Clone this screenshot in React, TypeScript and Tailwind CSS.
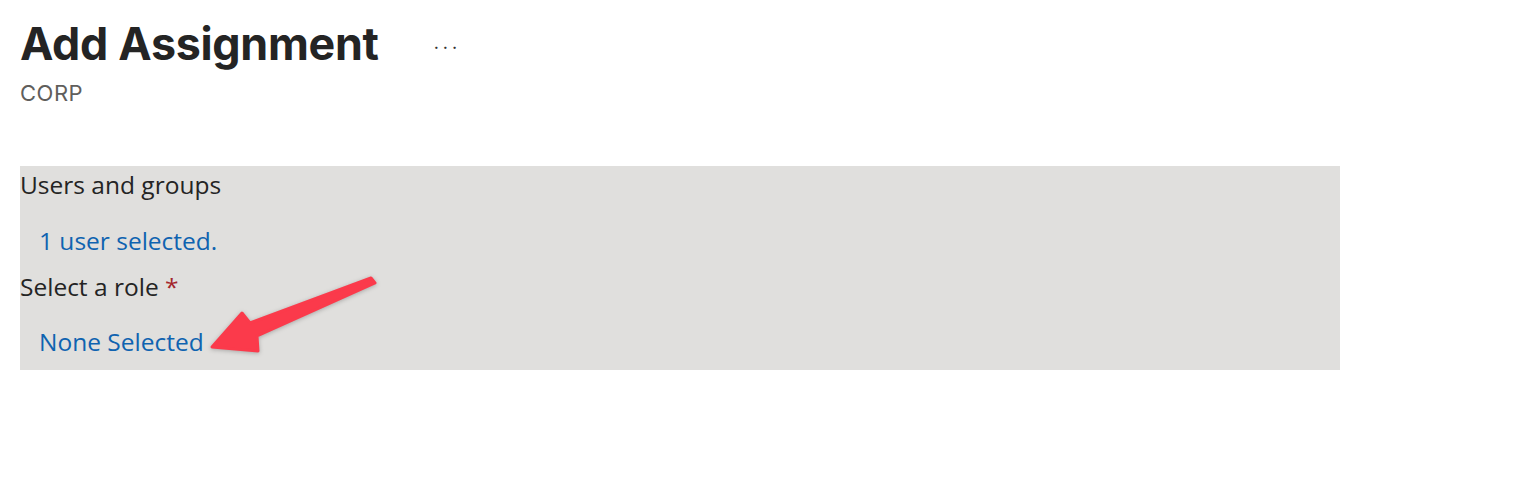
import React from "react";

const Arrow: React.FC = () => (
  <svg
    className="absolute left-0 top-0 pointer-events-none"
    width="400"
    height="204"
    viewBox="0 0 400 204"
    style={{ filter: "drop-shadow(0 1px 2px rgba(0,0,0,0.25))" }}
  >
    <polygon
      points="351,112 355,117 237,170 238,185 192,181 222,147 230,157"
      fill="#fb3a4b"
      stroke="#fb3a4b"
      strokeWidth="3"
      strokeLinejoin="round"
    />
  </svg>
);

export default function App() {
  return (
    <div className="min-h-[482px] bg-white px-5 pt-[14px]">
      <div className="flex items-start">
        <h1 className="text-[44.8px] leading-[60px] font-bold text-[#242424] tracking-[-0.3px]" style={{ fontFamily: "Inter, sans-serif" }}>
          Add Assignment
        </h1>
        <span className="ml-[55px] mt-[24px] text-[18px] leading-[20px] text-[#323130] tracking-[4px]" style={{ fontFamily: "Inter, sans-serif" }}>
          ···
        </span>
      </div>
      <div className="mt-[5px] text-[22px] leading-[28px] text-[#605e5c] tracking-[0.5px]" style={{ fontFamily: "Inter, sans-serif" }}>
        CORP
      </div>

      <div
        className="relative mt-[59px] w-[1320px] h-[204px] bg-[#e0dfdd] text-[24.5px]"
        style={{ fontFamily: "'Open Sans', 'Noto Sans', sans-serif" }}
      >
        <div className="pt-[3px] leading-[32px] text-[#242424]">Users and groups</div>
        <div className="mt-[24px] pl-[19px] leading-[32px] text-[#0f63b0]">1 user selected.</div>
        <div className="mt-[14px] leading-[32px] text-[#242424]">
          Select a role <span className="text-[#a4262c]">*</span>
        </div>
        <div className="mt-[23px] pl-[19px] leading-[32px] text-[#0f63b0]">None Selected</div>
        <Arrow />
      </div>
    </div>
  );
}
